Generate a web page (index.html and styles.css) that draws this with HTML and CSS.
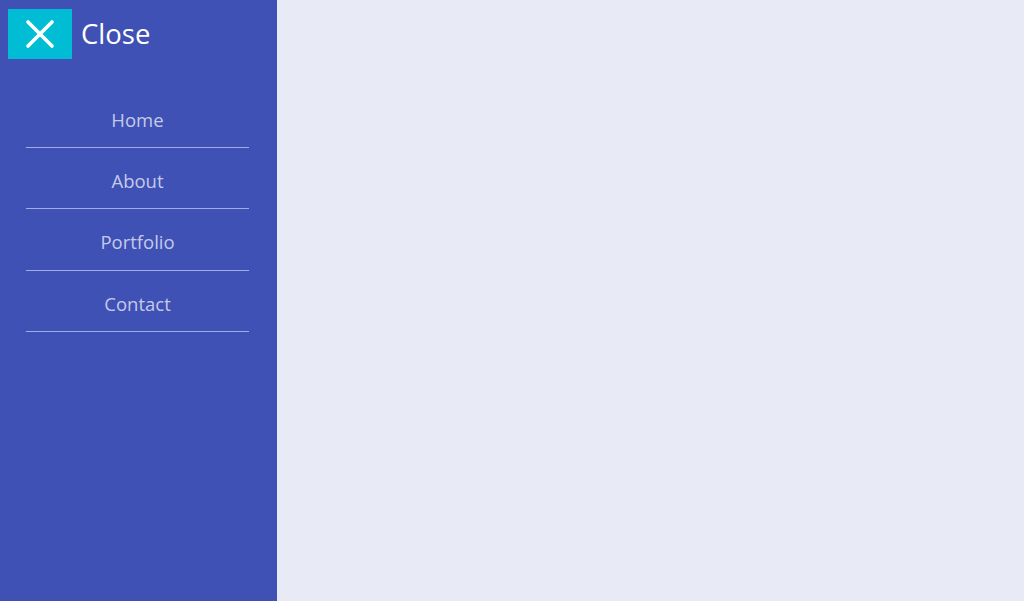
FILE: index.html
```html
<!DOCTYPE html>
<html>
<head>
<meta charset="utf-8">
<link rel="stylesheet" href="styles.css">
</head>
<body>
<div class="page">
  <aside class="sidebar">
    <div class="header">
      <button class="close-btn" aria-label="Close">
        <svg width="30" height="30" viewBox="0 0 30 30"><path d="M3 3 L27 27 M27 3 L3 27" stroke="#fff" stroke-width="3.6" stroke-linecap="round" fill="none"/></svg>
      </button>
      <span class="close-label">Close</span>
    </div>
    <nav class="nav">
      <a class="nav-item" href="#">Home</a>
      <a class="nav-item" href="#">About</a>
      <a class="nav-item" href="#">Portfolio</a>
      <a class="nav-item" href="#">Contact</a>
    </nav>
  </aside>
  <main class="content"></main>
</div>
</body>
</html>
```

FILE: styles.css
```css
html, body {
  margin: 0;
  padding: 0;
  height: 100%;
}
body {
  font-family: "Open Sans", "Liberation Sans", sans-serif;
  background: #e8eaf6;
}
.page {
  display: flex;
  height: 601px;
}
.sidebar {
  width: 277px;
  flex: none;
  background: #3f51b5;
  display: flex;
  flex-direction: column;
}
.header {
  display: flex;
  align-items: center;
  padding: 9px 0 0 8px;
  gap: 9px;
}
.close-btn {
  width: 64px;
  height: 50px;
  border: none;
  padding: 0;
  margin: 0;
  background: #00bcd4;
  display: flex;
  align-items: center;
  justify-content: center;
}
.close-label {
  color: #fff;
  font-size: 27.5px;
  line-height: 36px;
  margin-top: -1px;
}
.nav {
  display: flex;
  flex-direction: column;
  margin: 27.67px 28px 0 26px;
}
.nav-item {
  display: block;
  text-align: center;
  color: #c5cae9;
  text-decoration: none;
  font-size: 18.5px;
  line-height: 25px;
  padding: 20px 0 15.33px;
  border-bottom: 1px solid #a3acea;
}
.content {
  flex: 1;
  background: #e8eaf6;
}
```
